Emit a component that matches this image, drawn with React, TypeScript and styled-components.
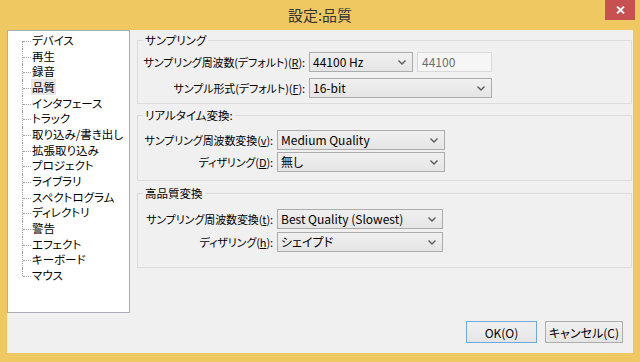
import React from "react";
import styled, { createGlobalStyle } from "styled-components";

const treeItems = [
  "デバイス",
  "再生",
  "録音",
  "品質",
  "インタフェース",
  "トラック",
  "取り込み/書き出し",
  "拡張取り込み",
  "プロジェクト",
  "ライブラリ",
  "スペクトログラム",
  "ディレクトリ",
  "警告",
  "エフェクト",
  "キーボード",
  "マウス",
];

const GlobalStyle = createGlobalStyle`
  html, body {
    margin: 0;
    padding: 0;
  }
  body {
    font-family: "Noto Sans CJK JP", "Noto Sans", sans-serif;
    font-feature-settings: "palt";
  }
  #root {
    width: 640px;
    height: 362px;
  }
`;

const Window = styled.div`
  width: 640px;
  height: 362px;
  background: #f0c862;
  display: flex;
  flex-direction: column;
  box-sizing: border-box;
`;

const TitleBar = styled.div`
  height: 30px;
  flex: none;
  display: grid;
  grid-template-columns: 1fr auto 1fr;
  align-items: center;
`;

const Title = styled.div`
  grid-column: 2;
  font-size: 15px;
  line-height: 18px;
  color: #333;
`;

const CloseButton = styled.div`
  grid-column: 3;
  justify-self: end;
  align-self: start;
  margin-right: 5px;
  width: 30px;
  height: 20px;
  background: #c75050;
  display: flex;
  align-items: center;
  justify-content: center;
`;

const Client = styled.div`
  flex: 1;
  margin: 0 7px 9px 7px;
  background: #f0f0f0;
  display: flex;
  flex-direction: column;
  font-size: 11px;
  color: #000;
`;

const Top = styled.div`
  height: 283px;
  display: flex;
`;

const Tree = styled.ul`
  width: 123px;
  box-sizing: border-box;
  margin: 0;
  padding: 2px 0 0 14px;
  background: #fff;
  border: 1px solid #abadb3;
  list-style: none;
  font-size: 11.5px;
`;

const TreeItem = styled.li<{ $last?: boolean }>`
  position: relative;
  height: 15.67px;
  line-height: 15.67px;
  padding-left: 9px;
  white-space: nowrap;

  &::before {
    content: "";
    position: absolute;
    left: 0;
    top: 0;
    height: ${(p) => (p.$last ? "8px" : "100%")};
    border-left: 1px dotted #a0a0a0;
  }
  &::after {
    content: "";
    position: absolute;
    left: 1px;
    top: 8px;
    width: 8px;
    border-top: 1px dotted #a0a0a0;
  }
  &:first-child::before {
    top: 8px;
    height: 8px;
  }
`;

const TreeLabel = styled.span<{ $selected?: boolean }>`
  padding: 0 1px;
  background: ${(p) => (p.$selected ? "#e6e6e6" : "transparent")};
`;

const Panel = styled.div`
  flex: 1;
  padding: 2px 1px 0 7px;
  display: flex;
  flex-direction: column;
`;

const Group = styled.fieldset<{ $top: number; $bottom: number; $gap: number; $mt: number }>`
  margin: ${(p) => p.$mt}px 0 0 0;
  padding: ${(p) => p.$top}px 5px ${(p) => p.$bottom}px 5px;
  border: 1px solid #dcdcdc;
  display: flex;
  flex-direction: column;
  gap: ${(p) => p.$gap}px;
  min-width: 0;
`;

const Legend = styled.legend`
  padding: 0 2px;
  font-size: 11.5px;
  line-height: 16px;
`;

const Row = styled.div`
  display: flex;
  align-items: center;
  gap: 4px;
  height: 20px;
`;

const Label = styled.label<{ $w: number }>`
  width: ${(p) => p.$w}px;
  text-align: right;
  white-space: nowrap;
  line-height: 20px;
  letter-spacing: -0.1px;
`;

const Key = styled.u`
  text-underline-offset: 1px;
`;

const Combo = styled.div<{ $w: number }>`
  width: ${(p) => p.$w}px;
  height: 20px;
  box-sizing: border-box;
  border: 1px solid #acacac;
  background: linear-gradient(#f0f0f0, #e5e5e5);
  display: flex;
  align-items: center;
  justify-content: space-between;
  padding: 0 6px 0 3px;
  line-height: 18px;
  font-size: 12px;
`;

const Field = styled.div`
  width: 75px;
  height: 20px;
  box-sizing: border-box;
  border: 1px solid #d9d9d9;
  background: #f6f6f6;
  color: #6d6d6d;
  padding-left: 4px;
  line-height: 18px;
  font-size: 12px;
`;

const Footer = styled.div`
  display: flex;
  justify-content: flex-end;
  gap: 8px;
  padding: 8px 10px 0 0;
`;

const Button = styled.button<{ $w: number; $default?: boolean }>`
  width: ${(p) => p.$w}px;
  height: 22px;
  box-sizing: border-box;
  border: 1px solid ${(p) => (p.$default ? "#6fa8dc" : "#acacac")};
  background: linear-gradient(#f0f0f0, #e5e5e5);
  font-family: inherit;
  font-feature-settings: "palt";
  font-size: 12px;
  color: #000;
  padding: 0;
`;

const Chevron = () => (
  <svg width="8" height="5" viewBox="0 0 8 5">
    <path d="M0.5 0.5 L4 4 L7.5 0.5" fill="none" stroke="#5a5a5a" strokeWidth="1.4" />
  </svg>
);

const Select = ({ w, value }: { w: number; value: string }) => (
  <Combo $w={w}>
    <span>{value}</span>
    <Chevron />
  </Combo>
);

export default function App() {
  return (
    <>
      <GlobalStyle />
      <Window>
        <TitleBar>
          <Title>設定:品質</Title>
          <CloseButton>
            <svg width="9" height="8" viewBox="0 0 9 8">
              <path d="M1 0.5 L8 7.5 M8 0.5 L1 7.5" stroke="#fff" strokeWidth="1.8" />
            </svg>
          </CloseButton>
        </TitleBar>
        <Client>
          <Top>
            <Tree>
              {treeItems.map((t, i) => (
                <TreeItem key={t} $last={i === treeItems.length - 1}>
                  <TreeLabel $selected={t === "品質"}>{t}</TreeLabel>
                </TreeItem>
              ))}
            </Tree>
            <Panel>
              <Group $mt={0} $top={4} $bottom={5} $gap={6}>
                <Legend>サンプリング</Legend>
                <Row>
                  <Label $w={162}>
                    サンプリング周波数(デフォルト)(<Key>R</Key>):
                  </Label>
                  <Select w={104} value="44100 Hz" />
                  <Field>44100</Field>
                </Row>
                <Row>
                  <Label $w={162}>
                    サンプル形式(デフォルト)(<Key>F</Key>):
                  </Label>
                  <Select w={183} value="16-bit" />
                </Row>
              </Group>
              <Group $mt={3} $top={7} $bottom={8} $gap={2}>
                <Legend>リアルタイム変換:</Legend>
                <Row>
                  <Label $w={130}>
                    サンプリング周波数変換(<Key>v</Key>):
                  </Label>
                  <Select w={168} value="Medium Quality" />
                </Row>
                <Row>
                  <Label $w={130}>
                    ディザリング(<Key>D</Key>):
                  </Label>
                  <Select w={168} value="無し" />
                </Row>
              </Group>
              <Group $mt={4} $top={8} $bottom={15} $gap={3}>
                <Legend>高品質変換</Legend>
                <Row>
                  <Label $w={130}>
                    サンプリング周波数変換(<Key>t</Key>):
                  </Label>
                  <Select w={166} value="Best Quality (Slowest)" />
                </Row>
                <Row>
                  <Label $w={130}>
                    ディザリング(<Key>h</Key>):
                  </Label>
                  <Select w={166} value="シェイプド" />
                </Row>
              </Group>
            </Panel>
          </Top>
          <Footer>
            <Button $w={71} $default>
              OK(O)
            </Button>
            <Button $w={78}>キャンセル(C)</Button>
          </Footer>
        </Client>
      </Window>
    </>
  );
}
